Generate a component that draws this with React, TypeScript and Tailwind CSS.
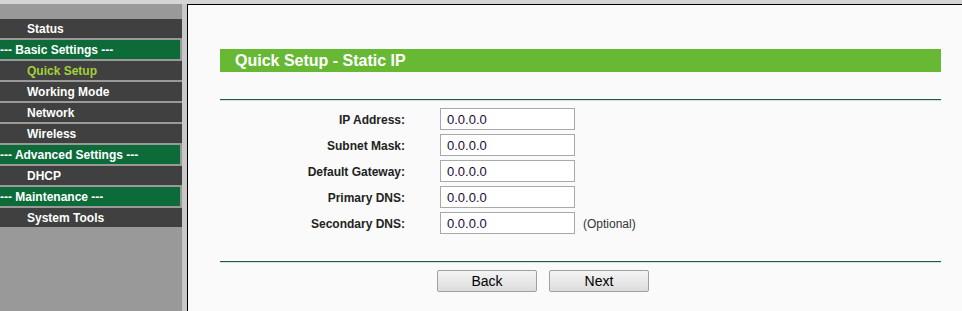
import React from "react";

type MenuItem = { label: string; kind: "item" | "group"; active?: boolean };

const MENU: MenuItem[] = [
  { label: "Status", kind: "item" },
  { label: "--- Basic Settings ---", kind: "group" },
  { label: "Quick Setup", kind: "item", active: true },
  { label: "Working Mode", kind: "item" },
  { label: "Network", kind: "item" },
  { label: "Wireless", kind: "item" },
  { label: "--- Advanced Settings ---", kind: "group" },
  { label: "DHCP", kind: "item" },
  { label: "--- Maintenance ---", kind: "group" },
  { label: "System Tools", kind: "item" },
];

const FIELDS = [
  { label: "IP Address:", value: "0.0.0.0" },
  { label: "Subnet Mask:", value: "0.0.0.0" },
  { label: "Default Gateway:", value: "0.0.0.0" },
  { label: "Primary DNS:", value: "0.0.0.0" },
  { label: "Secondary DNS:", value: "0.0.0.0", note: "(Optional)" },
];

function Sidebar() {
  return (
    <div className="flex w-[187px] shrink-0">
      <div className="w-[182px] bg-[#999999] pt-[15px]">
        {MENU.map((m) =>
          m.kind === "group" ? (
            <div
              key={m.label}
              className="mb-[2px] flex h-[19px] w-[180px] items-center bg-[#0c6b39] pt-px text-[12px] font-bold text-white"
            >
              {m.label}
            </div>
          ) : (
            <div
              key={m.label}
              className={`mb-[2px] flex h-[19px] items-center bg-[#404040] pl-[27px] pt-px text-[12px] font-bold ${
                m.active ? "text-[#a3d13b]" : "text-white"
              }`}
            >
              {m.label}
            </div>
          )
        )}
      </div>
      <div className="w-[5px] bg-[#c8c8c8]" />
    </div>
  );
}

function Rule() {
  return (
    <div>
      <div className="h-px bg-[#1f5e3c]" />
      <div className="h-px bg-[#d3e2d7]" />
    </div>
  );
}

export default function App() {
  return (
    <div className="flex h-[311px] w-[962px] flex-col overflow-hidden bg-[#d4d4d4] font-['Liberation_Sans',Arial,sans-serif]">
      <div className="h-[4px] shrink-0" />
      <div className="flex flex-1">
        <Sidebar />
        <div className="flex-1 border-l border-t border-black bg-[#fafafa] pl-[32px] pr-[21px] pt-[44px]">
          <div className="flex h-[23px] items-center bg-[#67b934] pl-[15px] text-[16px] font-bold text-white">
            Quick Setup - Static IP
          </div>
          <div className="mt-[27px]">
            <Rule />
          </div>
          <div className="mt-[7px] flex flex-col gap-[4px]">
            {FIELDS.map((f) => (
              <div key={f.label} className="flex h-[22px] items-center">
                <div className="w-[185px] pt-px text-right text-[12px] font-bold text-[#222]">{f.label}</div>
                <div className="ml-[35px] flex h-[22px] w-[135px] items-center border border-[#a9a9a9] bg-white pl-[6px] pt-px text-[13px] text-[#1a0a33]">
                  {f.value}
                </div>
                {f.note && <div className="ml-[8px] pt-px text-[12px] text-[#333]">{f.note}</div>}
              </div>
            ))}
          </div>
          <div className="mt-[27px]">
            <Rule />
          </div>
          <div className="mt-[7px] flex gap-[12px] pl-[217px]">
            {["Back", "Next"].map((b) => (
              <button
                key={b}
                className="flex h-[22px] w-[100px] items-center justify-center rounded-[2px] border border-[#a0a0a0] bg-gradient-to-b from-[#f4f4f4] to-[#dcdcdc] text-[14px] text-black"
              >
                {b}
              </button>
            ))}
          </div>
        </div>
      </div>
    </div>
  );
}
